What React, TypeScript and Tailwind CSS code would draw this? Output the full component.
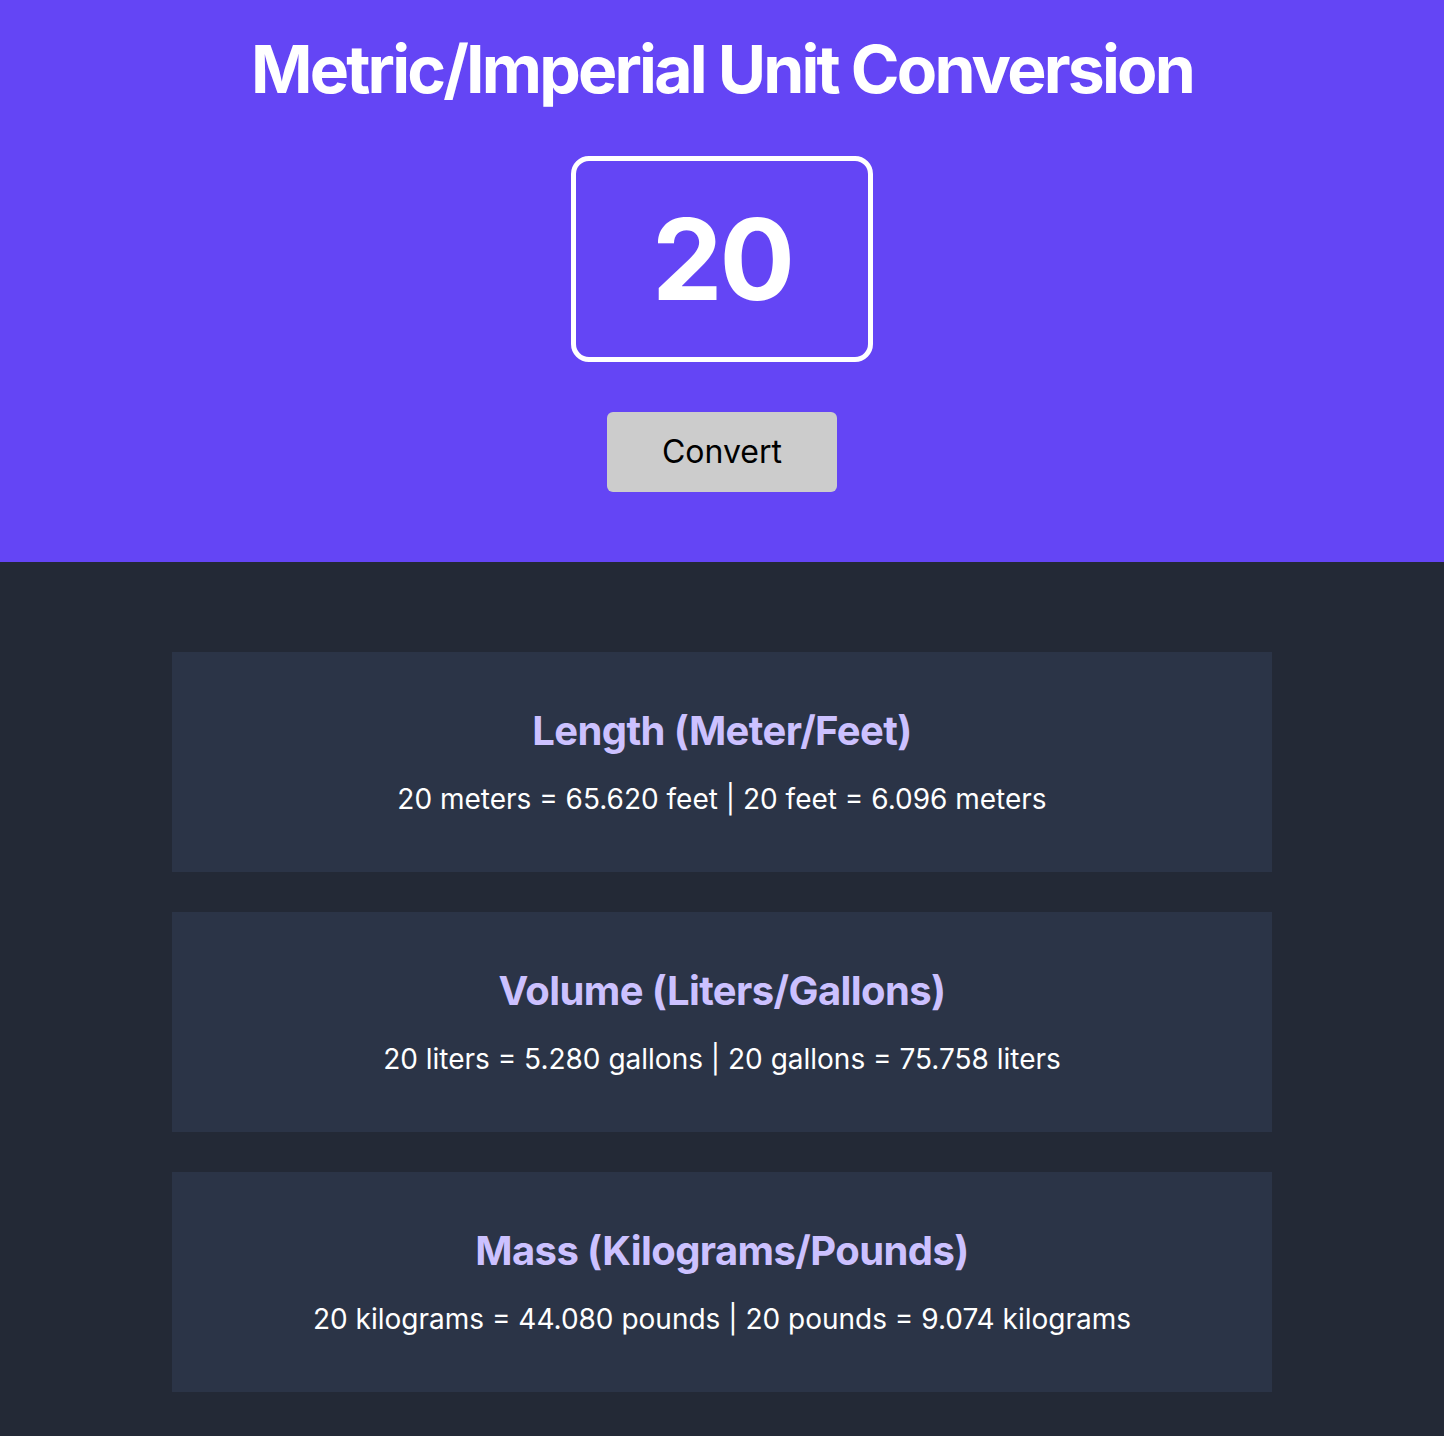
import { useState } from "react";

const font = { fontFamily: "Inter, 'Noto Sans', sans-serif" };

function ResultCard({ title, text }: { title: string; text: string }) {
  return (
    <div className="w-[1100px] h-[220px] bg-[#2b3447] flex flex-col items-center justify-center">
      <h2 className="text-[40px] font-bold text-[#ccc1ff] leading-none tracking-[-0.6px]">{title}</h2>
      <p className="mt-[34px] text-[28px] text-white leading-none">{text}</p>
    </div>
  );
}

export default function App() {
  const [value] = useState(20);

  const m2ft = (value * 3.281).toFixed(3);
  const ft2m = (value / 3.281).toFixed(3);
  const l2g = (value * 0.264).toFixed(3);
  const g2l = (value / 0.264).toFixed(3);
  const kg2lb = (value * 2.204).toFixed(3);
  const lb2kg = (value / 2.204).toFixed(3);

  return (
    <div style={font} className="min-h-[1436px] bg-[#232936]">
      <section className="bg-[#6445f5] h-[562px] flex flex-col items-center pt-[29px]">
        <h1 className="text-[66px] font-bold text-white leading-[80px] tracking-[-2.8px]">
          Metric/Imperial Unit Conversion
        </h1>
        <div className="mt-[47px] w-[302px] h-[206px] border-[5px] border-white rounded-[18px] flex items-center justify-center">
          <span className="text-[112px] font-bold text-white leading-none tracking-[-3px]">{value}</span>
        </div>
        <button className="mt-[50px] w-[230px] h-[80px] bg-[#cccccc] rounded-[6px] text-[32px] text-black">
          Convert
        </button>
      </section>
      <main className="flex flex-col items-center gap-[40px] pt-[90px] pb-[44px]">
        <ResultCard
          title="Length (Meter/Feet)"
          text={`${value} meters = ${m2ft} feet | ${value} feet = ${ft2m} meters`}
        />
        <ResultCard
          title="Volume (Liters/Gallons)"
          text={`${value} liters = ${l2g} gallons | ${value} gallons = ${g2l} liters`}
        />
        <ResultCard
          title="Mass (Kilograms/Pounds)"
          text={`${value} kilograms = ${kg2lb} pounds | ${value} pounds = ${lb2kg} kilograms`}
        />
      </main>
    </div>
  );
}
